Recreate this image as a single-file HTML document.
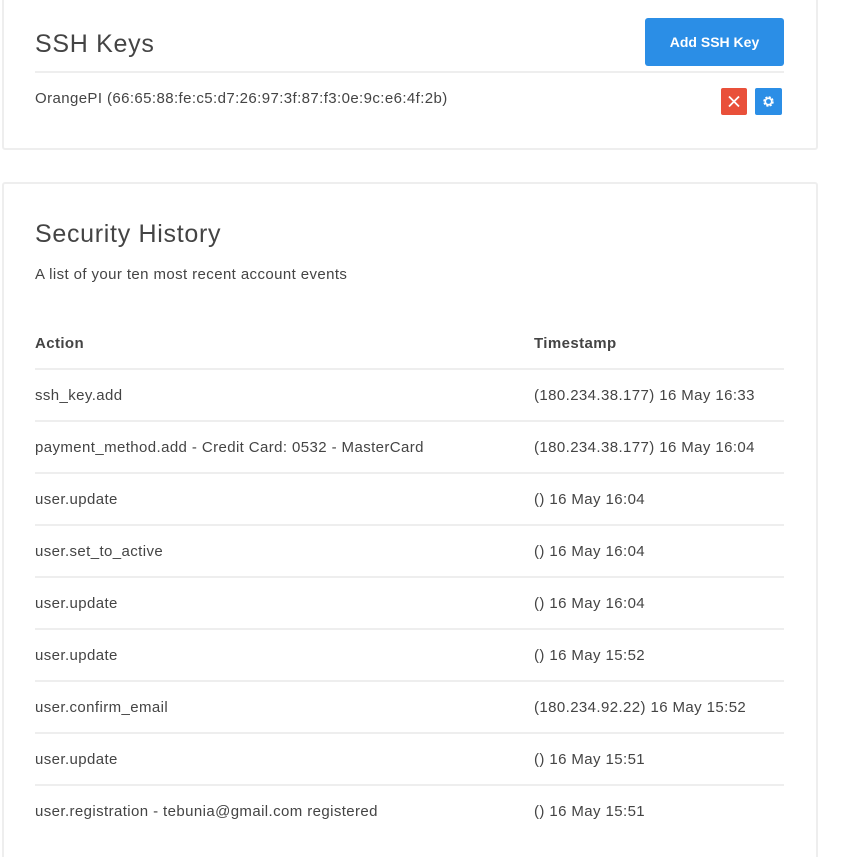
<!DOCTYPE html>
<html style="overflow:hidden;height:857px"><head><style>
body{margin:0;background:#fff;font-family:"Liberation Sans",sans-serif;color:#444;width:846px;height:857px;overflow:hidden;position:relative}
.card{position:absolute;left:2px;width:812px;border:2px solid #eee;border-radius:3px;background:#fff}
h2{position:absolute;margin:0;font-weight:normal;font-size:25px;color:#444;letter-spacing:0.7px}
.t{position:absolute;font-size:15px;white-space:nowrap;letter-spacing:0.4px}
.line{position:absolute;left:35px;width:749px;height:2px;background:#eee}
</style></head><body>
<div class="card" style="top:-4px;height:150px"></div>
<h2 style="left:35px;top:30px">SSH Keys</h2>
<div style="position:absolute;left:645px;top:18px;width:139px;height:48px;background:#2b8ee6;border-radius:3px;color:#fff;font-weight:bold;font-size:14px;line-height:48px;text-align:center">Add SSH Key</div>
<div class="line" style="top:71px"></div>
<div class="t" style="left:35px;top:90px">OrangePI (66:65:88:fe:c5:d7:26:97:3f:87:f3:0e:9c:e6:4f:2b)</div>
<div style="position:absolute;left:721px;top:88px;width:26px;height:27px;background:#e9503a;border-radius:2px"><svg width="26" height="27"><path d="M8 8.5l10 10M18 8.5l-10 10" stroke="#fff" stroke-width="1.8"/></svg></div>
<div style="position:absolute;left:755px;top:88px;width:27px;height:27px;background:#2b8ee6;border-radius:2px"><svg width="27" height="27"><circle cx="13.5" cy="13.5" r="4" fill="none" stroke="#fff" stroke-width="2.5" stroke-dasharray="2 1.15"/><circle cx="13.5" cy="13.5" r="3.2" fill="none" stroke="#fff" stroke-width="1.6"/></svg></div>

<div class="card" style="top:182px;height:690px"></div>
<h2 style="left:35px;top:220px">Security History</h2>
<div class="t" style="left:35px;top:266px">A list of your ten most recent account events</div>
<div class="t" style="left:35px;top:335px;font-weight:bold">Action</div>
<div class="t" style="left:534px;top:335px;font-weight:bold">Timestamp</div>
<div class="line" style="top:368px"></div>
<div class="t" style="left:35px;top:387px">ssh_key.add</div><div class="t" style="left:534px;top:387px">(180.234.38.177) 16 May 16:33</div>
<div class="line" style="top:420px"></div>
<div class="t" style="left:35px;top:439px">payment_method.add - Credit Card: 0532 - MasterCard</div><div class="t" style="left:534px;top:439px">(180.234.38.177) 16 May 16:04</div>
<div class="line" style="top:472px"></div>
<div class="t" style="left:35px;top:491px">user.update</div><div class="t" style="left:534px;top:491px">() 16 May 16:04</div>
<div class="line" style="top:524px"></div>
<div class="t" style="left:35px;top:543px">user.set_to_active</div><div class="t" style="left:534px;top:543px">() 16 May 16:04</div>
<div class="line" style="top:576px"></div>
<div class="t" style="left:35px;top:595px">user.update</div><div class="t" style="left:534px;top:595px">() 16 May 16:04</div>
<div class="line" style="top:628px"></div>
<div class="t" style="left:35px;top:647px">user.update</div><div class="t" style="left:534px;top:647px">() 16 May 15:52</div>
<div class="line" style="top:680px"></div>
<div class="t" style="left:35px;top:699px">user.confirm_email</div><div class="t" style="left:534px;top:699px">(180.234.92.22) 16 May 15:52</div>
<div class="line" style="top:732px"></div>
<div class="t" style="left:35px;top:751px">user.update</div><div class="t" style="left:534px;top:751px">() 16 May 15:51</div>
<div class="line" style="top:784px"></div>
<div class="t" style="left:35px;top:803px">user.registration - tebunia@gmail.com registered</div><div class="t" style="left:534px;top:803px">() 16 May 15:51</div>
</body></html>
